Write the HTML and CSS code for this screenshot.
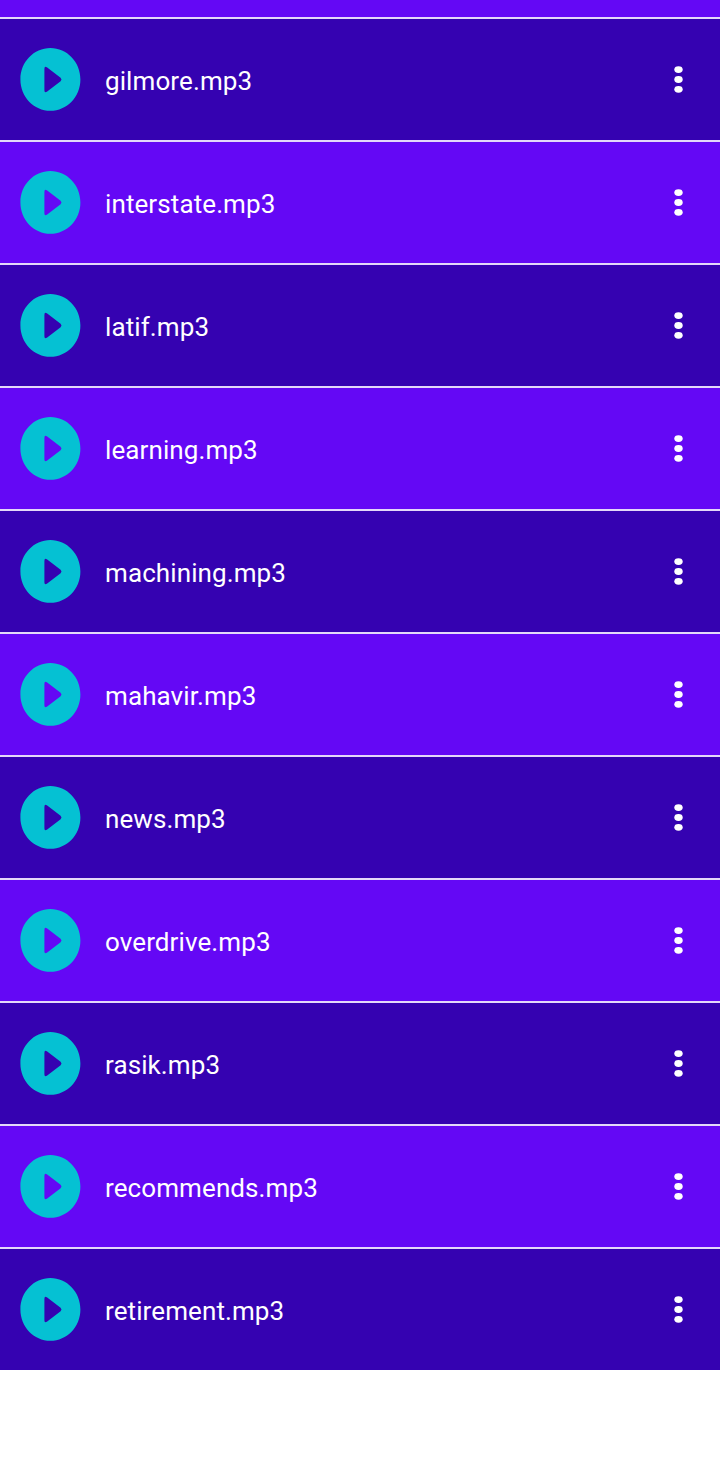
FILE: index.html
```
<!DOCTYPE html>
<html>
<head>
    <meta charset="utf-8">
    <title>Music</title>
    <link rel="stylesheet" href="styles.css">
</head>
<body>
    <!-- shared icons -->
    <svg class="icons">
        <symbol id="play" viewBox="-.4 .6 62 64">
            <path fill-rule="evenodd" d="M31 .7C47.600 .7 61 14.700 61 32S47.600 63.300 31 63.300 1 49.300 1 32 14.400 .7 31 .7ZM25 21.500V42.800Q25 46.200 27.800 44.200L41.200 33.800Q43 32.100 41.200 30.400L27.800 20.100Q25 18.100 25 21.500Z"/>
        </symbol>
        <symbol id="more" viewBox=".5 .5 10 28">
            <ellipse cx="5" cy="4.100" rx="4.200" ry="3.400"/>
            <ellipse cx="5" cy="14" rx="4.200" ry="3.400"/>
            <ellipse cx="5" cy="23.800" rx="4.200" ry="3.400"/>
        </symbol>
    </svg>

    <div class="list" id="list">
        <div class="row first"></div>
    </div>

    <script>
        const songs = ['gilmore', 'interstate', 'latif', 'learning', 'machining', 'mahavir',
            'news', 'overdrive', 'rasik', 'recommends', 'retirement'];
        const list = document.getElementById('list');

        songs.forEach(function (song) {
            const row = document.createElement('div');
            row.className = 'row';
            row.innerHTML = '<svg class="play"><use href="#play"/></svg>' +
                '<span class="name">' + song + '.mp3</span>' +
                '<svg class="more"><use href="#more"/></svg>';
            list.appendChild(row);
        });
    </script>
</body>
</html>
```

FILE: styles.css
```
body {
    margin: 0;
    background-color: #fff;
    font-family: Roboto, sans-serif;
    color: #fff;
}
.icons {
    display: none;
}
.list {
    display: flex;
    flex-direction: column;
}
.row {
    display: flex;
    align-items: center;
    box-sizing: border-box;
    height: 123px;
    padding: 0 36px 0 19px;
    border-top: 2px solid #e4d8fa;
    background-color: #3502b1;
}
.row:nth-child(odd) {
    background-color: #6408f5;
}
.row.first {
    height: 17px;
    border-top: none;
}
.play {
    width: 62px;
    height: 64px;
    fill: #05c1d3;
}
.name {
    flex: 1;
    margin-left: 24px;
    padding-top: 3px;
    font-size: 26px;
    line-height: 30px;
    letter-spacing: .1px;
}
.more {
    width: 10px;
    height: 28px;
    fill: #fff;
}
```
